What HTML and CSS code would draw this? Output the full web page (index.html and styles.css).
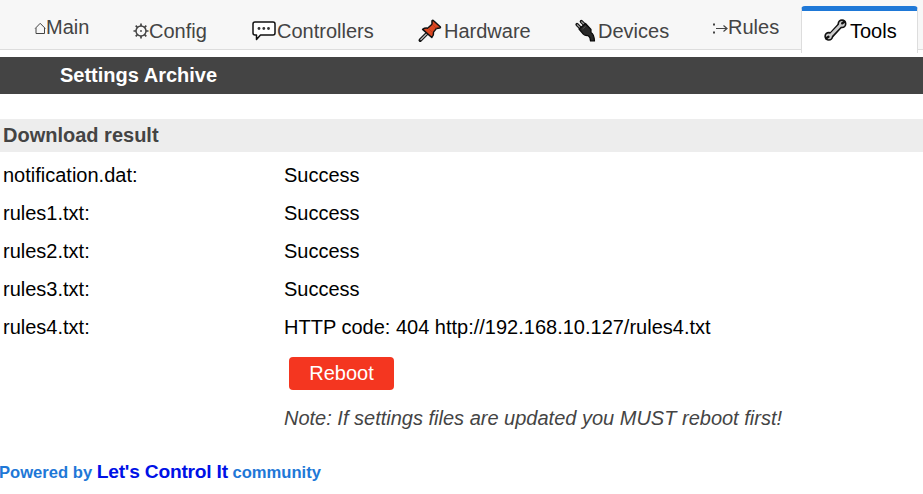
FILE: index.html
```html
<!DOCTYPE html>
<html lang="en">
<head>
<meta charset="utf-8">
<title>Settings Archive</title>
<link rel="stylesheet" href="styles.css">
</head>
<body>
<nav class="menu">
  <a class="tab raised"><svg class="icon home" viewBox="0 0 12 22"><path d="M2 13v5.500h8.500V13M1.200 13.500L6.200 8.300l5.100 5.200" fill="none" stroke="#444" stroke-width="1"/></svg>Main</a>
  <a class="tab"><svg class="icon gear" viewBox="0 0 16 22"><g fill="none" stroke="#444"><circle cx="8" cy="12" r="5" stroke-width="1.500"/><path d="M8 4.500v2.500M8 17v2.500M.5 12h2.500M13 12h2.500M2.700 6.700l1.700 1.700M11.600 15.600l1.700 1.700M2.700 17.300l1.700-1.700M11.600 8.400l1.700-1.700" stroke-width="1.700"/></g><circle cx="8" cy="12" r=".9" fill="#444"/></svg>Config</a>
  <a class="tab"><svg class="icon wide" viewBox="0 0 25 22"><path d="M3 3h18q2 0 2 2v9q0 2-2 2H8.500L4.500 20.500V16H3q-2 0-2-2V5q0-2 2-2z" fill="#fff" stroke="#111" stroke-width="1.500" stroke-linejoin="round"/><g fill="#333"><circle cx="7" cy="9.500" r="1.400"/><circle cx="11.800" cy="9.500" r="1.400"/><circle cx="16.500" cy="9.500" r="1.400"/></g></svg>Controllers</a>
  <a class="tab"><svg class="icon wide" viewBox="0 0 25 22"><path d="M1.200 21.200l6.500-6.500" stroke="#111" stroke-width="3.400" stroke-linecap="round"/><path d="M1.500 21l7-7" stroke="#bbb" stroke-width="1.300"/><path d="M13 1.800q.8-.8 1.600 0l6.600 6q.7 1-.4 1.300l-3.300.3-3 3.700q.5 3-1.700 5.400L3.600 10.400q2.200-1.700 5-1.200L13 5.300z" fill="#db4722" stroke="#111" stroke-width="1.500" stroke-linejoin="round"/><path d="M13.500 5.500l4 4M9 9l5 5" stroke="#b83a1c" stroke-width=".8"/></svg>Hardware</a>
  <a class="tab"><svg class="icon plug" viewBox="0 0 23 22"><path d="M2 5.500l4 4M6.300 2.500l4 4" stroke="#111" stroke-width="3.200" stroke-linecap="round"/><path d="M2 5.500l4 4M6.300 2.500l4 4" stroke="#999" stroke-width="1.200"/><path d="M4 10l6.500-5.500L16 10.500v3q3 1.500 3.500 8.500H15.500q0-4-2.500-5.500-3 .3-4.500-1.200z" fill="#292929" stroke="#080808" stroke-width="1.200" stroke-linejoin="round"/><path d="M7.500 10l3-2.500" stroke="#555" stroke-width="1"/></svg>Devices</a>
  <a class="tab raised"><svg class="icon gear" viewBox="0 0 16 22"><path d="M1 8.500h2v2H1zM1 16.500h2v2H1z" fill="#444"/><path d="M4 13.500h11M11.500 10.500l3.500 3-3.500 3" fill="none" stroke="#444" stroke-width="1.200"/></svg>Rules</a>
  <a class="tab active"><svg class="icon tool" viewBox="0 0 26 22"><g stroke-linecap="round"><path d="M6 17.500L17 5.500" stroke="#111" stroke-width="5.600"/><circle cx="4.800" cy="17.300" r="3.700" fill="#ccc" stroke="#111" stroke-width="1.600"/><circle cx="18" cy="4.800" r="3.700" fill="#ccc" stroke="#111" stroke-width="1.600"/><path d="M6 17L17 5.500" stroke="#ccc" stroke-width="2.800"/><path d="M2.200 19.300l2.300-1.500M20.500 2.700l-2.300 1.600" stroke="#111" stroke-width="2.300"/></g></svg>Tools</a>
</nav>
<header class="title">Settings Archive</header>
<h2 class="section">Download result</h2>
<dl class="results">
  <dt>notification.dat:</dt><dd>Success</dd>
  <dt>rules1.txt:</dt><dd>Success</dd>
  <dt>rules2.txt:</dt><dd>Success</dd>
  <dt>rules3.txt:</dt><dd>Success</dd>
  <dt>rules4.txt:</dt><dd>HTTP code: 404 http://192.168.10.127/rules4.txt</dd>
</dl>
<div class="actions">
  <button class="reboot">Reboot</button>
  <p class="note">Note: If settings files are updated you MUST reboot first!</p>
</div>
<footer class="powered">Powered by <a>Let's Control It</a> community</footer>
</body>
</html>
```
FILE: styles.css
```css
* { box-sizing: border-box; }
body {
  margin: 0;
  height: 494px;
  overflow: hidden;
  background: #fff;
  color: #000;
  font: 20px/24px "Liberation Sans", Arial, sans-serif;
}
.menu {
  display: grid;
  grid-template-columns: 99px 119px 167px 156px 137px 89px 117px;
  height: 57px;
  padding-left: 34px;
  background: linear-gradient(#f7f7f7 49px, #ddd 49px, #ddd 50px, #fff 50px);
}
.tab {
  display: flex;
  align-items: flex-start;
  height: 48px;
  padding-top: 19px;
  color: #444;
  white-space: nowrap;
}
.raised { padding-top: 15px; }
.active {
  height: 47px;
  margin-top: 6px;
  padding: 8px 0 0 22px;
  border: 1px solid #ddd;
  border-top: 5px solid #1e78d7;
  border-bottom: 0;
  border-radius: 4px 4px 0 0;
  background: #fff;
  color: #000;
}
.icon { flex: none; height: 22px; overflow: visible; }
.home { width: 12px; }
.gear { width: 16px; }
.wide { width: 25px; }
.plug { width: 23px; }
.tool { width: 26px; }
.title {
  height: 37px;
  padding-left: 60px;
  background: #444;
  color: #fff;
  font-weight: bold;
  line-height: 36px;
}
.section {
  height: 33px;
  margin: 25px 0 4px;
  padding-left: 3px;
  background: #ededed;
  color: #444;
  font-size: 20px;
  line-height: 32px;
}
.results {
  display: grid;
  grid-template-columns: 281px 1fr;
  grid-auto-rows: 38px;
  margin: 0;
  padding-left: 3px;
  line-height: 38px;
}
.results dd { margin: 0; }
.actions { padding: 11px 0 0 284px; }
.reboot {
  display: block;
  width: 105px;
  height: 33px;
  margin-left: 5px;
  padding: 0 0 1px;
  border: 0;
  border-radius: 4px;
  background: #f43620;
  color: #fff;
  font: inherit;
}
.note {
  margin: 16px 0 0;
  color: #444;
  font-style: italic;
}
.powered {
  margin: 30px 0 0 -1px;
  color: #1e78d7;
  font-size: 16.6px;
  font-weight: bold;
}
.powered a { color: #0011e6; font-size: 19.2px; letter-spacing: -0.22px; }
```
